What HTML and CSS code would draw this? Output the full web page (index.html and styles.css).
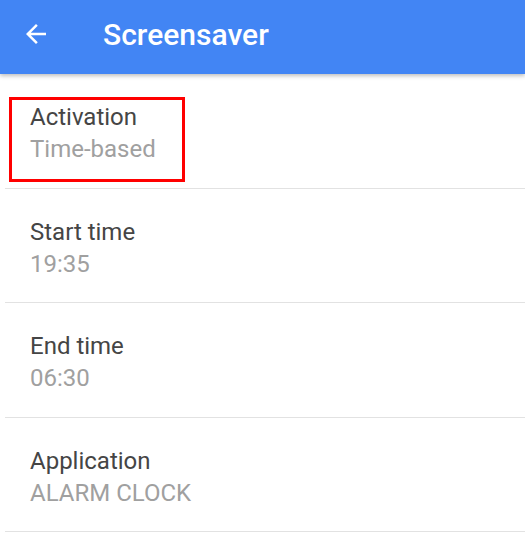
FILE: index.html
```html
<!DOCTYPE html>
<html lang="en">

<head>
    <meta charset="UTF-8">
    <link rel="stylesheet" href="styles.css">
    <meta name="viewport" content="width=device-width, initial-scale=1.0">
    <title>Screensaver</title>
</head>

<body>
    <header class="toolbar">
        <svg class="back" width="24" height="24" viewBox="0 0 24 24">
            <path d="M20 11H7.83l5.59-5.59L12 4l-8 8 8 8 1.41-1.41L7.83 13H20v-2z" fill="#fff" />
        </svg>
        <h1 class="title">Screensaver</h1>
    </header>
    <ul class="list">
        <li class="item">
            <div class="mark"></div>
            <div class="name">Activation</div>
            <div class="value">Time-based</div>
        </li>
        <li class="item">
            <div class="name">Start time</div>
            <div class="value">19:35</div>
        </li>
        <li class="item">
            <div class="name">End time</div>
            <div class="value">06:30</div>
        </li>
        <li class="item">
            <div class="name">Application</div>
            <div class="value">ALARM CLOCK</div>
        </li>
    </ul>
</body>

</html>
```

FILE: styles.css
```css
body {
    margin: 0;
    font-family: Roboto, "Noto Sans", sans-serif;
    background: #fff;
}

.toolbar {
    height: 74px;
    background: #4285f4;
    display: flex;
    align-items: center;
    box-shadow: 0 2px 4px rgba(0, 0, 0, 0.25);
    position: relative;
}

.back {
    width: 30px;
    height: 30px;
    margin-left: 21px;
    margin-bottom: 6px;
}

.title {
    margin: 0 0 6px 52px;
    color: #fff;
    font-size: 30px;
    font-weight: 500;
}

.list {
    list-style: none;
    margin: 0;
    padding: 0;
}

.item {
    position: relative;
    margin-left: 5px;
    padding: 27px 0 0 25px;
    box-sizing: border-box;
    height: 114.5px;
    border-bottom: 1px solid #e2e2e2;
}

.name {
    font-size: 24px;
    line-height: 32px;
    color: #454545;
}

.value {
    font-size: 24px;
    line-height: 32px;
    color: #a0a0a0;
}

.mark {
    position: absolute;
    left: 4px;
    top: 23px;
    width: 170px;
    height: 79px;
    border: 3px solid #f00;
}
```
